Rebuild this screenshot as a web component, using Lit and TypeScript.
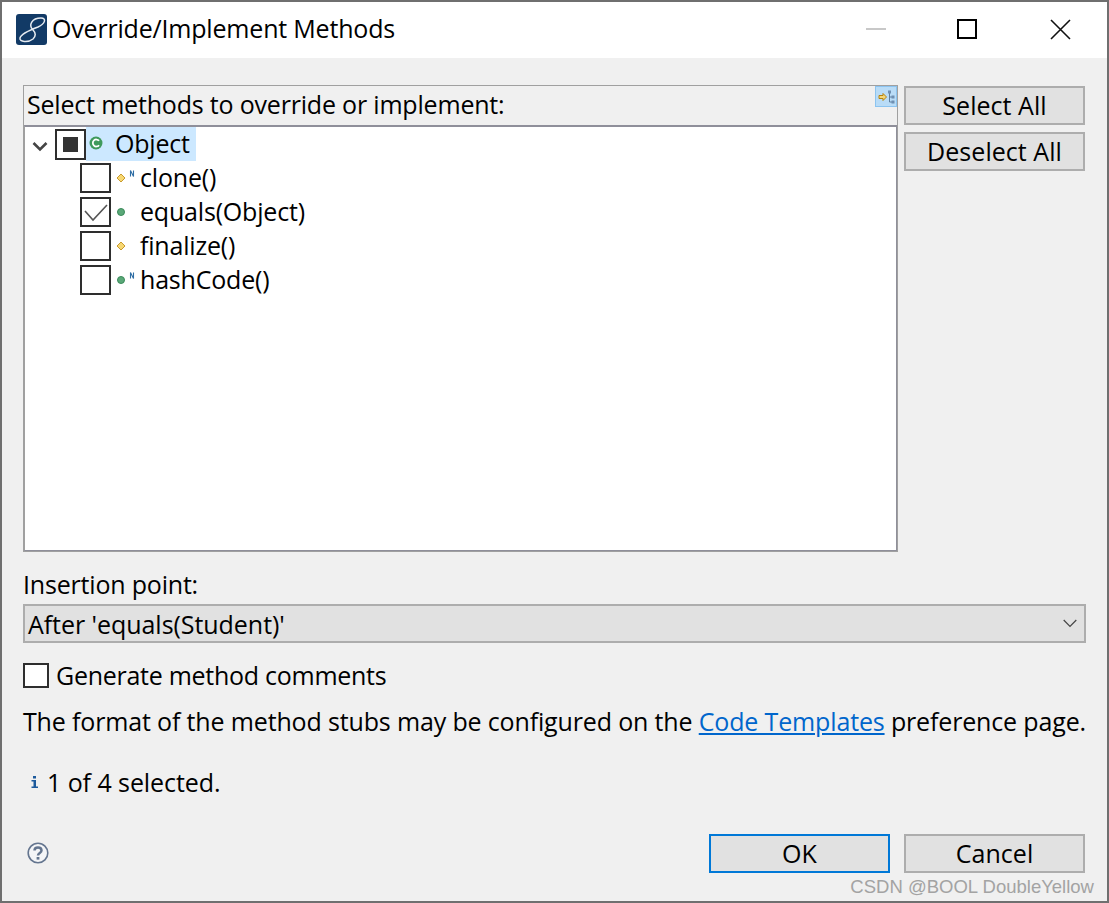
import { LitElement, css, html, svg } from 'lit';
import { customElement, state } from 'lit/decorators.js';

type Kind = 'protected' | 'public';

interface Method {
  name: string;
  kind: Kind;
  native: boolean;
  checked: boolean;
}

const METHODS: Method[] = [
  { name: 'clone()', kind: 'protected', native: true, checked: false },
  { name: 'equals(Object)', kind: 'public', native: false, checked: true },
  { name: 'finalize()', kind: 'protected', native: false, checked: false },
  { name: 'hashCode()', kind: 'public', native: true, checked: false },
];

const kindIcon = (kind: Kind) =>
  kind === 'public'
    ? svg`<circle cx="6" cy="8" r="3.5" fill="#5aa878" stroke="#3a8a5a" stroke-width="1"/>`
    : svg`<path d="M6 4 10 8 6 12 2 8Z" fill="#f7d873" stroke="#c99a2e" stroke-width="1"/>`;

@customElement('app-root')
export class AppRoot extends LitElement {
  @state() private methods = METHODS;

  static styles = css`
    :host {
      display: block;
      width: 1109px;
      height: 903px;
      font-family: 'Open Sans', 'Noto Sans', sans-serif;
      font-size: 25px;
      letter-spacing: -0.19px;
      color: #000;
    }
    * {
      box-sizing: border-box;
    }
    svg {
      display: block;
    }
    .window {
      width: 1109px;
      height: 903px;
      border: 2px solid #6f6f6f;
      background: #f0f0f0;
      display: flex;
      flex-direction: column;
    }
    .titlebar {
      height: 56px;
      flex: none;
      background: #fff;
      display: flex;
      align-items: center;
      padding-left: 14px;
    }
    .app-icon {
      width: 31px;
      height: 31px;
      flex: none;
      margin: 0 5px 2px 0;
    }
    .title {
      flex: 1;
      white-space: nowrap;
      padding-bottom: 4px;
    }
    .win-btns {
      display: flex;
      align-items: center;
      padding-bottom: 2px;
    }
    .win-btn {
      height: 54px;
      display: flex;
      align-items: center;
      justify-content: center;
    }
    .win-min {
      width: 90px;
    }
    .win-max {
      width: 92px;
    }
    .win-close {
      width: 94px;
    }
    .body {
      flex: 1;
      display: flex;
      flex-direction: column;
      padding: 27px 21px 0;
      min-height: 0;
    }
    .top {
      display: flex;
      gap: 6px;
      height: 467px;
      flex: none;
    }
    .panel {
      width: 875px;
      flex: none;
      border: 1px solid #a0a0a0;
      display: flex;
      flex-direction: column;
      position: relative;
    }
    .panel-head {
      height: 39px;
      flex: none;
      padding-left: 3px;
      line-height: 37px;
      white-space: nowrap;
    }
    .filter {
      position: absolute;
      top: 0;
      right: 0;
      width: 22px;
      height: 21px;
      background: #b9dcf7;
      border: 1px solid #8cc4f0;
    }
    .tree {
      flex: 1;
      background: #fff;
      border: 1px solid #8f8f9a;
      border-top-width: 2px;
      border-left-color: #a0a0a0;
    }
    .row {
      height: 34px;
      display: flex;
      align-items: center;
      white-space: nowrap;
    }
    .root {
      padding-left: 6px;
    }
    .method {
      padding-left: 55px;
    }
    .chevron {
      width: 18px;
      height: 12px;
      flex: none;
      margin: 3px 6px 0 0;
    }
    .box {
      width: 31px;
      height: 31px;
      flex: none;
      border: 2px solid #2e2e2e;
      background: #fff;
      display: flex;
      align-items: center;
      justify-content: center;
    }
    .method .box {
      height: 30px;
    }
    .square {
      width: 15px;
      height: 15px;
      background: #333;
    }
    .selected {
      background: #cce8ff;
      height: 34px;
      display: flex;
      align-items: center;
      padding-right: 6px;
    }
    .text {
      padding-bottom: 2px;
    }
    .class-icon {
      width: 14px;
      height: 14px;
      flex: none;
      margin: -3px 12px 0 3px;
    }
    .overlay-icon {
      width: 24px;
      height: 16px;
      flex: none;
      margin: 0 1px 0 4px;
    }
    .side {
      display: flex;
      flex-direction: column;
      gap: 7px;
      padding-top: 1px;
    }
    .btn {
      width: 181px;
      height: 39px;
      background: #e1e1e1;
      border: 2px solid #adadad;
      display: flex;
      align-items: center;
      justify-content: center;
      padding-bottom: 2px;
      letter-spacing: 0.05px;
    }
    .btn.default {
      border-color: #0078d7;
    }
    .label {
      margin-top: 18px;
      height: 34px;
      line-height: 28px;
    }
    .combo {
      height: 39px;
      flex: none;
      background: #e1e1e1;
      border: 2px solid #adadad;
      display: flex;
      align-items: center;
      justify-content: space-between;
      padding: 0 7px 0 3px;
      letter-spacing: -0.05px;
    }
    .check-line {
      display: flex;
      align-items: center;
      margin-top: 20px;
      height: 25px;
      letter-spacing: -0.27px;
    }
    .check-line .box {
      width: 26px;
      height: 25px;
      margin-right: 7px;
    }
    .note {
      margin-top: 16px;
      height: 34px;
      line-height: 34px;
      white-space: nowrap;
      letter-spacing: -0.15px;
    }
    .note a {
      color: #0066cc;
      text-decoration: underline;
    }
    .status {
      margin-top: 27px;
      height: 34px;
      display: flex;
      align-items: center;
      letter-spacing: -0.07px;
    }
    .status svg {
      width: 7px;
      height: 12px;
      margin: 0 9px 0 8px;
    }
    .footer {
      margin-top: 35px;
      height: 39px;
      padding-right: 1px;
      display: flex;
      align-items: center;
      position: relative;
      gap: 14px;
    }
    .help {
      width: 22px;
      height: 22px;
      margin: 0 auto 2px 4px;
    }
    .watermark {
      position: absolute;
      right: -8px;
      bottom: -25px;
      font-family: 'Liberation Sans', sans-serif;
      font-size: 18.5px;
      letter-spacing: 0;
      color: #a3a3a3;
      white-space: nowrap;
    }
  `;

  private renderRow(m: Method) {
    return html`
      <div class="row method">
        <span class="box">
          ${m.checked
            ? html`<svg width="27" height="26" viewBox="0 0 27 26">
                <path d="M3 12 11 21 25 6" fill="none" stroke="#555" stroke-width="1.6" />
              </svg>`
            : ''}
        </span>
        <svg class="overlay-icon" viewBox="0 0 24 16">
          ${kindIcon(m.kind)}
          ${m.native
            ? svg`<path d="M15.5 6.5V0.5L18.5 6.5V0.5" fill="none" stroke="#2f6ea5" stroke-width="1.1"/>`
            : ''}
        </svg>
        <span class="text">${m.name}</span>
      </div>
    `;
  }

  render() {
    return html`
      <div class="window">
        <div class="titlebar">
          <svg class="app-icon" viewBox="0 0 31 31">
            <rect width="31" height="31" rx="3" fill="#123a66" />
            <path
              d="M17 16C12 11 16 4 25 4C31 4 29 10 22 13C14 16 5 20 4 24C3 28 12 29 17 25C20 22 20 19 17 16Z"
              fill="none"
              stroke="#e6ebf1"
              stroke-width="1.5"
            />
          </svg>
          <div class="title">Override/Implement Methods</div>
          <div class="win-btns">
            <div class="win-btn win-min">
              <svg width="20" height="2"><rect width="20" height="2" fill="#c8c8c8" /></svg>
            </div>
            <div class="win-btn win-max">
              <svg width="20" height="20">
                <rect x="1" y="1" width="18" height="18" fill="none" stroke="#000" stroke-width="2" />
              </svg>
            </div>
            <div class="win-btn win-close">
              <svg width="21" height="21">
                <path d="M1 1 20 20M20 1 1 20" stroke="#111" stroke-width="1.6" fill="none" />
              </svg>
            </div>
          </div>
        </div>
        <div class="body">
          <div class="top">
            <div class="panel">
              <div class="panel-head">Select methods to override or implement:</div>
              <div class="filter">
                <svg width="20" height="19" viewBox="0 0 20 19">
                  <path d="M3 8.5H7V6.5L10.5 10 7 13.5V11.5H3Z" fill="#f4d77a" stroke="#b5830f" stroke-width="1" />
                  <path d="M13.5 6V15H16M13.5 10H16" fill="none" stroke="#5f7f9f" stroke-width="1" />
                  <rect x="12" y="3.5" width="3" height="3" fill="#6f8fb2" />
                  <rect x="15.5" y="8.5" width="3" height="3" fill="#6f8fb2" />
                  <rect x="15.5" y="13.5" width="3" height="3" fill="#6f8fb2" />
                </svg>
              </div>
              <div class="tree">
                <div class="row root">
                  <svg class="chevron" viewBox="0 0 18 12">
                    <path d="M2.5 3 9 9.5 15.5 3" fill="none" stroke="#444" stroke-width="2.6" />
                  </svg>
                  <span class="box"><span class="square"></span></span>
                  <span class="selected">
                    <svg class="class-icon" viewBox="0 0 16 16">
                      <circle cx="8" cy="8" r="7.4" fill="#3f9a5c" />
                      <path d="M11.5 5.5A4 4 0 1 0 11.5 10.5" fill="none" stroke="#fff" stroke-width="2" />
                    </svg>
                    <span class="text">Object</span>
                  </span>
                </div>
                ${this.methods.map((m) => this.renderRow(m))}
              </div>
            </div>
            <div class="side">
              <div class="btn">Select All</div>
              <div class="btn">Deselect All</div>
            </div>
          </div>
          <div class="label">Insertion point:</div>
          <div class="combo">
            <span>After 'equals(Student)'</span>
            <svg width="14" height="9" viewBox="0 0 14 9">
              <path d="M0.7 1 7 7.5 13.3 1" fill="none" stroke="#444" stroke-width="1.2" />
            </svg>
          </div>
          <div class="check-line">
            <span class="box"></span><span class="text">Generate method comments</span>
          </div>
          <div class="note">
            The format of the method stubs may be configured on the
            <a>Code Templates</a> preference page.
          </div>
          <div class="status">
            <svg viewBox="0 0 7 12">
              <path d="M2 0H5V2.5H2ZM0.5 4H5V10.5H7V12H0.5V10.5H2.5V5.5H0.5Z" fill="#1d5a9c" />
            </svg>
            1 of 4 selected.
          </div>
          <div class="footer">
            <svg class="help" viewBox="0 0 22 22">
              <circle cx="11" cy="11" r="9.8" fill="#f4f5f7" stroke="#64758f" stroke-width="1.6" />
              <path d="M7.5 8.5C7.5 4.5 14.5 4.5 14.5 8.5C14.5 11 11 11 11 13.5" fill="none" stroke="#64758f" stroke-width="2.5" />
              <rect x="9.6" y="15" width="2.8" height="2.6" fill="#64758f" />
            </svg>
            <div class="btn default">OK</div>
            <div class="btn">Cancel</div>
            <div class="watermark">CSDN @BOOL DoubleYellow</div>
          </div>
        </div>
      </div>
    `;
  }
}
